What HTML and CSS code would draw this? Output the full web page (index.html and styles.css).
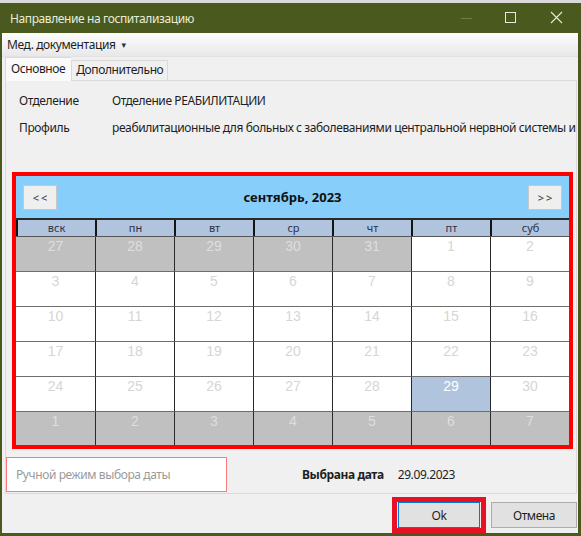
FILE: index.html
```html
<!DOCTYPE html>
<html lang="ru">
<head>
<meta charset="utf-8">
<link rel="stylesheet" href="styles.css">
</head>
<body>
<div class="strip"></div>
<div class="window">
  <div class="titlebar">
    <span class="title">Направление на госпитализацию</span>
    <div class="controls">
      <svg class="ctl" width="46" height="30" viewBox="0 0 46 30"><line x1="20" y1="15.5" x2="31" y2="15.5" stroke="#6f7d4c" stroke-width="1"/></svg>
      <svg class="ctl" width="46" height="30" viewBox="0 0 46 30"><rect x="18.5" y="9.5" width="10" height="10" fill="none" stroke="#e6e9dc" stroke-width="1"/></svg>
      <svg class="ctl" width="46" height="30" viewBox="0 0 46 30"><path d="M18 9 L29 20 M29 9 L18 20" stroke="#e6e9dc" stroke-width="1.1"/></svg>
    </div>
  </div>
  <div class="menubar"><span class="menu">Мед. документация</span><span class="caret">&#9662;</span></div>
  <div class="tabs">
    <div class="tab active">Основное</div>
    <div class="tab">Дополнительно</div>
  </div>
  <div class="panel">
    <div class="info">
      <div class="row"><span class="lbl">Отделение</span><span class="val">Отделение РЕАБИЛИТАЦИИ</span></div>
      <div class="row"><span class="lbl">Профиль</span><span class="val">реабилитационные для больных с заболеваниями центральной нервной системы и органов чувств</span></div>
    </div>
    <div class="calendar">
      <div class="cal-head">
        <div class="navbtn">&lt;&lt;</div>
        <div class="month">сентябрь, 2023</div>
        <div class="navbtn">&gt;&gt;</div>
      </div>
      <div class="dow">
        <div>вск</div><div>пн</div><div>вт</div><div>ср</div><div>чт</div><div>пт</div><div>суб</div>
      </div>
      <div class="days">
        <div class="d out">27</div><div class="d out">28</div><div class="d out">29</div><div class="d out">30</div><div class="d out">31</div><div class="d">1</div><div class="d">2</div>
        <div class="d">3</div><div class="d">4</div><div class="d">5</div><div class="d">6</div><div class="d">7</div><div class="d">8</div><div class="d">9</div>
        <div class="d">10</div><div class="d">11</div><div class="d">12</div><div class="d">13</div><div class="d">14</div><div class="d">15</div><div class="d">16</div>
        <div class="d">17</div><div class="d">18</div><div class="d">19</div><div class="d">20</div><div class="d">21</div><div class="d">22</div><div class="d">23</div>
        <div class="d">24</div><div class="d">25</div><div class="d">26</div><div class="d">27</div><div class="d">28</div><div class="d sel">29</div><div class="d">30</div>
        <div class="d out last">1</div><div class="d out last">2</div><div class="d out last">3</div><div class="d out last">4</div><div class="d out last">5</div><div class="d out last">6</div><div class="d out last">7</div>
      </div>
    </div>
    <div class="bottom">
      <div class="manual">Ручной режим выбора даты</div>
      <span class="chosen-lbl">Выбрана дата</span>
      <span class="chosen">29.09.2023</span>
    </div>
  </div>
  <div class="buttons">
    <div class="okwrap"><div class="btn ok">Ok</div></div>
    <div class="btn cancel">Отмена</div>
  </div>
</div>
</body>
</html>
```
FILE: styles.css
```css
* { box-sizing: border-box; }
html, body { margin: 0; padding: 0; }
body {
  width: 581px;
  height: 536px;
  overflow: hidden;
  background: #f0f0f0;
  font-family: "Noto Sans", "DejaVu Sans", sans-serif;
  font-size: 12px;
  letter-spacing: -0.4px;
  color: #1e1e1e;
}
.strip { height: 3px; background: #d9d9d9; }
.window {
  height: 533px;
  display: flex;
  flex-direction: column;
  border-left: 2px solid #4a5a1e;
  border-right: 3px solid #4a5a1e;
  border-bottom: 3px solid #4a5a1e;
  background: #f0f0f0;
}
.titlebar {
  height: 30px;
  background: #4a5a1e;
  display: flex;
  align-items: center;
  justify-content: space-between;
  flex-shrink: 0;
}
.title { color: #e8ecdc; padding-left: 8px; font-size: 12px; }
.controls { display: flex; margin-right: -1px; }
.ctl { display: block; }
.menubar {
  height: 24px;
  flex-shrink: 0;
  display: flex;
  align-items: center;
  padding-left: 5px;
  background: linear-gradient(#fdfdfd, #e8e8e8);
  border-bottom: 1px solid #e2e2e2;
}
.caret { font-size: 9px; margin-left: 6px; color: #333; }
.tabs {
  height: 23px;
  flex-shrink: 0;
  display: flex;
  align-items: flex-end;
  padding-left: 3px;
  position: relative;
  z-index: 1;
}
.tab {
  height: 20px;
  padding: 0 4px;
  line-height: 18px;
  border: 1px solid #d9d9d9;
  border-bottom: none;
  background: #f0f0f0;
}
.tab.active {
  height: 24px;
  margin-bottom: -1px;
  line-height: 22px;
  background: #fafafa;
  padding: 0 6px 0 5px;
  border-right: none;
}
.panel {
  height: 414px;
  flex-shrink: 0;
  margin-left: 3px;
  margin-right: 1px;
  border: 1px solid #dadada;
  background: #f0f0f0;
  display: flex;
  flex-direction: column;
  overflow: hidden;
}
.info { padding-top: 6px; }
.row {
  height: 27px;
  display: flex;
  align-items: center;
  white-space: nowrap;
  padding-left: 13px;
}
.lbl { width: 93px; flex-shrink: 0; }
.val { overflow: hidden; }
.calendar {
  margin-top: 31px;
  margin-left: 6px;
  width: 561px;
  height: 277px;
  border: 4px solid #ff0000;
  background: #fff;
  flex-shrink: 0;
}
.cal-head {
  height: 42px;
  background: #87cefa;
  display: flex;
  align-items: center;
  justify-content: space-between;
  padding: 0 7px 0 7px;
}
.navbtn {
  width: 34px;
  height: 25px;
  margin-top: 1px;
  background: #efefef;
  border: 1px solid #c8c8c8;
  font-size: 11px;
  display: flex;
  align-items: center;
  justify-content: center;
  color: #333;
  letter-spacing: 2px;
  padding-left: 2px;
}
.month { font-weight: bold; font-size: 13px; color: #111; letter-spacing: 0; }
.dow {
  display: grid;
  grid-template-columns: repeat(7, 79px);
  height: 19px;
  background: #b0c4de;
  border-top: 2px solid #2a2a2a;
  border-bottom: 1px solid #555;
}
.dow div {
  border-left: 2px solid #151515;
  text-align: center;
  font-size: 11px;
  line-height: 16px;
  color: #2e3147;
  letter-spacing: 0;
}
.days {
  display: grid;
  grid-template-columns: repeat(7, 79px);
  grid-template-rows: 35px 35px 35px 35px 35px 33px;
}
.d {
  border-left: 1px solid #2a2a2a;
  border-bottom: 1px solid #6e6e6e;
  text-align: center;
  font-family: "Liberation Sans", Arial, sans-serif;
  font-size: 14px;
  letter-spacing: 0;
  line-height: 18px;
  color: #d6d6d6;
  background: #fff;
}
.d:nth-child(7n+1) { border-left: none; }
.d.out { background: #c0c0c0; color: #dedede; }
.d.sel { background: #b0c4de; color: #fff; }
.d.last { border-bottom: none; }
.bottom {
  margin-top: 8px;
  display: flex;
  align-items: center;
}
.manual {
  width: 221px;
  height: 35px;
  border: 1px solid #ff7b7b;
  background: #fff;
  color: #9a9a9a;
  display: flex;
  align-items: center;
  padding-left: 9px;
}
.chosen-lbl { margin-left: 75px; font-weight: bold; }
.chosen { margin-left: 14px; }
.buttons {
  flex: 1;
  display: flex;
  align-items: flex-start;
  justify-content: flex-end;
  padding-top: 3px;
  padding-right: 1px;
}
.okwrap {
  border: 5px solid #e81123;
  padding: 0 1px 0 1px;
  margin-right: 5px;
  height: 36px;
}
.btn {
  height: 26px;
  background: #e1e1e1;
  border: 1px solid #adadad;
  display: flex;
  align-items: center;
  justify-content: center;
}
.ok { width: 82px; border-color: #0078d7; }
.cancel { width: 86px; margin-top: 5px; }
```
